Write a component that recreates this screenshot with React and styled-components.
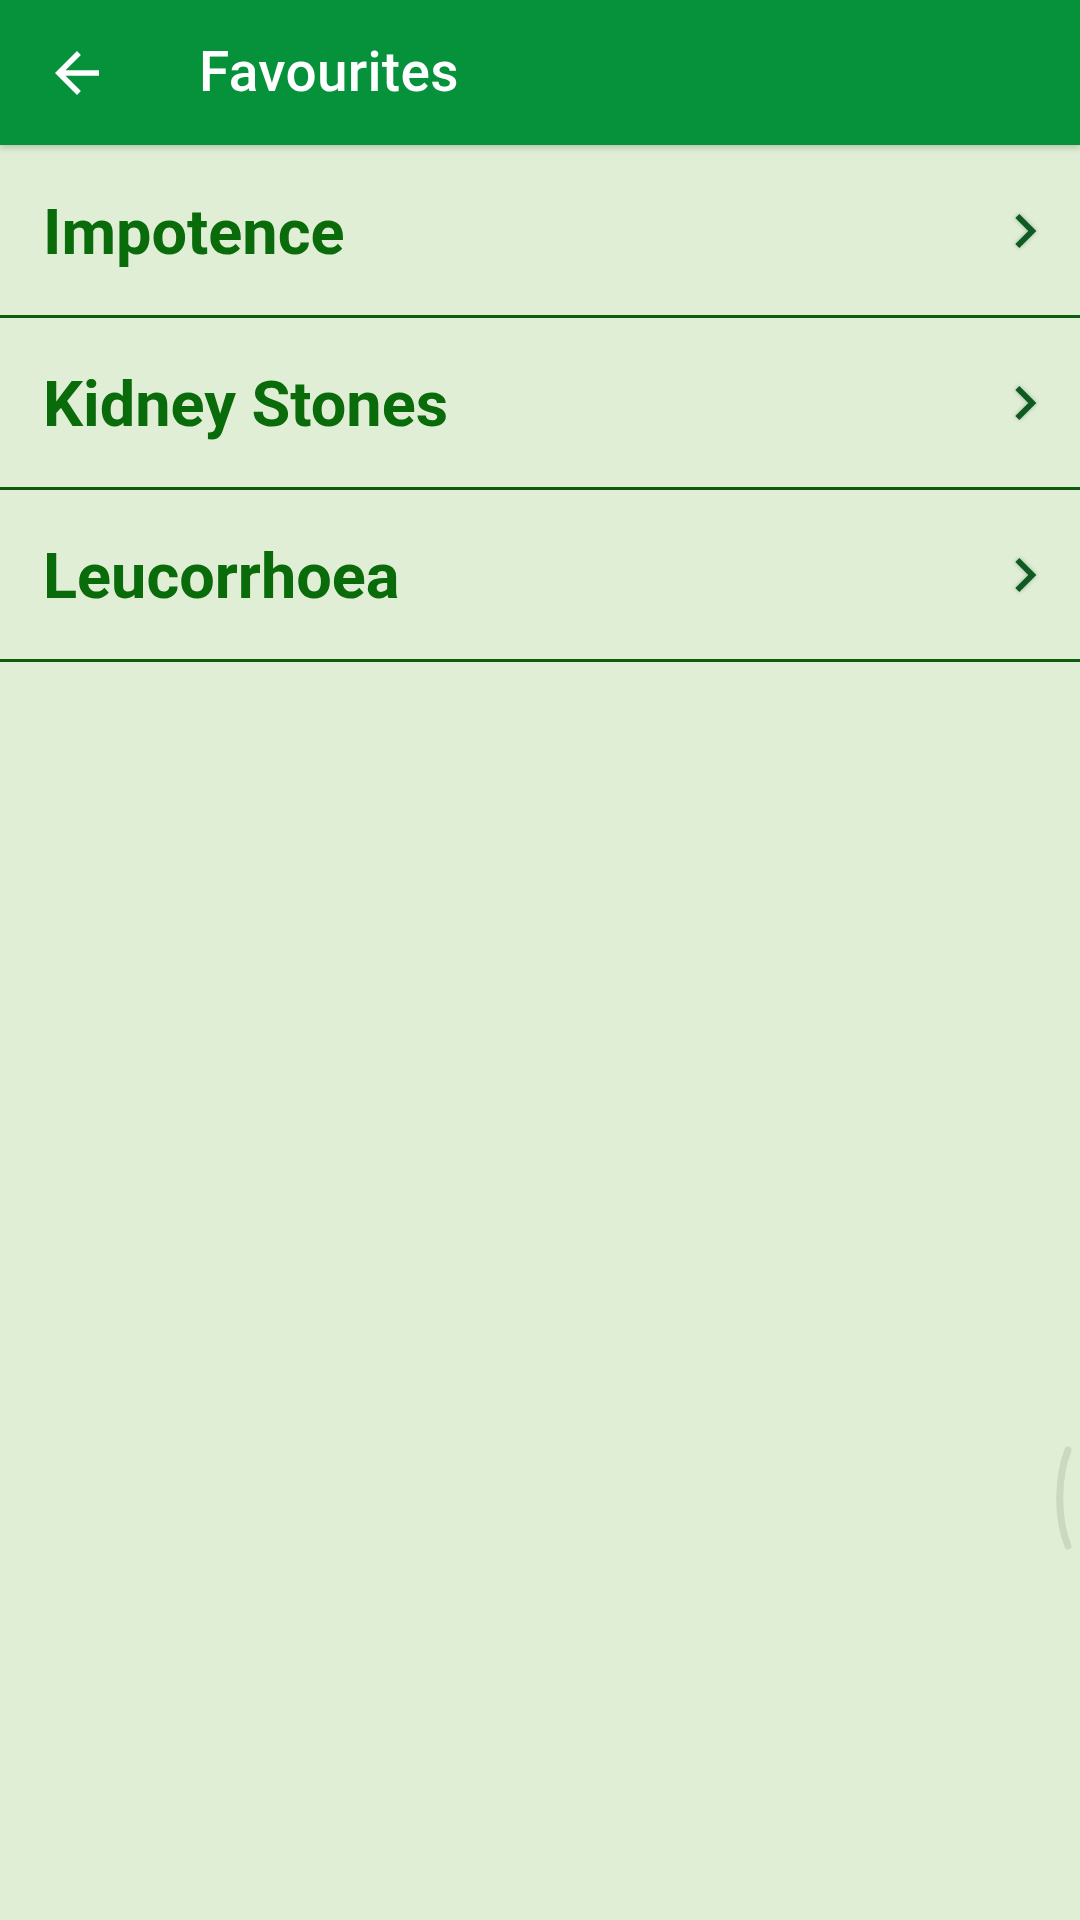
import styled, { createGlobalStyle } from 'styled-components';

const HeaderGreen = '#05923a';
const PageGreen = '#e0eed5';
const TextGreen = '#0a6b0a';
const LineGreen = '#0b5c0b';
const ChevronGreen = '#0e5a22';

const favourites = ['Impotence', 'Kidney Stones', 'Leucorrhoea'];

const GlobalStyle = createGlobalStyle`
    * {
        box-sizing: border-box;
    }
    html, body {
        margin: 0;
        padding: 0;
        background-color: ${PageGreen};
        font-family: Roboto, "Noto Sans", "Liberation Sans", sans-serif;
    }
`;

const BackIcon = () => (
    <svg width="66" height="66" viewBox="0 0 24 24" fill="#ffffff">
        <path d="M20 11H7.83l5.59-5.59L12 4l-8 8 8 8 1.41-1.41L7.83 13H20v-2z" />
    </svg>
);

const ChevronIcon = () => (
    <svg width="68" height="68" viewBox="0 0 24 24" fill={ChevronGreen}>
        <path d="M10 6L8.59 7.41 13.17 12l-4.58 4.59L10 18l6-6z" />
    </svg>
);

const App = () => {
    return (
        <>
            <GlobalStyle />
            <Screen>
                <AppBar>
                    <BackButton>
                        <BackIcon />
                    </BackButton>
                    <Title>Favourites</Title>
                </AppBar>
                <List>
                    {favourites.map((name) => (
                        <Row key={name}>
                            <RowLabel>{name}</RowLabel>
                            <ChevronBox>
                                <ChevronIcon />
                            </ChevronBox>
                        </Row>
                    ))}
                </List>
                <EdgeGlow>
                    <svg width="24" height="104" viewBox="0 0 24 104">
                        <path d="M16 4 C6 30, 4 70, 16 100" stroke="#c9d6c0" strokeWidth="7" fill="none" strokeLinecap="round" />
                    </svg>
                </EdgeGlow>
            </Screen>
        </>
    );
};

export default App;

const Screen = styled.div`
    position: relative;
    width: 1080px;
    height: 1920px;
    overflow: hidden;
    background-color: ${PageGreen};
    display: flex;
    flex-direction: column;
`;

const AppBar = styled.header`
    position: relative;
    z-index: 1;
    height: 145px;
    flex-shrink: 0;
    display: flex;
    align-items: center;
    padding-left: 44px;
    background-color: ${HeaderGreen};
    box-shadow: 0 3px 6px rgba(60, 90, 40, 0.25);
`;

const BackButton = styled.div`
    width: 66px;
    height: 66px;
    display: flex;
`;

const Title = styled.h1`
    margin: -2px 0 0 89px;
    color: #ffffff;
    font-size: 55px;
    font-weight: 500;
    letter-spacing: 0.3px;
`;

const List = styled.div`
    display: flex;
    flex-direction: column;
    padding-top: 1px;
`;

const Row = styled.div`
    height: 172px;
    display: flex;
    align-items: center;
    justify-content: space-between;
    padding-left: 43px;
    padding-right: 21px;
    border-bottom: 3px solid ${LineGreen};
`;

const RowLabel = styled.span`
    color: ${TextGreen};
    font-size: 63px;
    font-weight: 700;
    margin-top: 4px;
`;

const ChevronBox = styled.div`
    display: flex;
    filter: drop-shadow(0 0 2px rgba(14, 90, 34, 0.35));
`;

const EdgeGlow = styled.div`
    position: absolute;
    right: 4px;
    top: 1446px;
    display: flex;
    opacity: 0.9;
`;
